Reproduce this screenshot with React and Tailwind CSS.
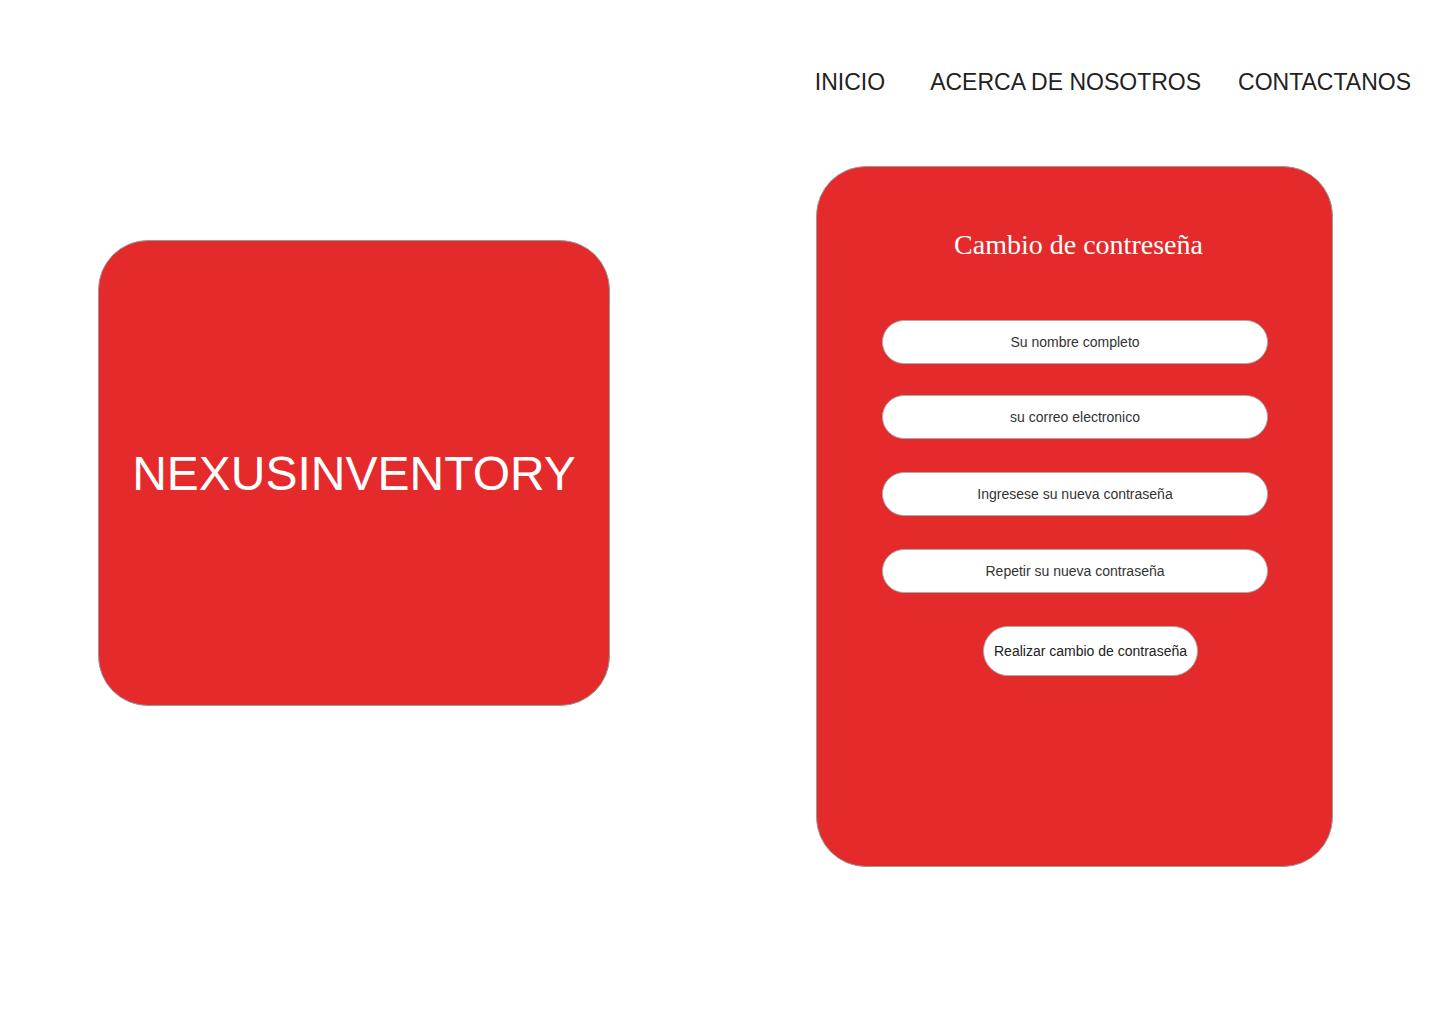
import React from "react";

const sans = { fontFamily: '"Liberation Sans", Arial, sans-serif' };

const fields = [
  { p: "Su nombre completo", mt: "mt-0" },
  { p: "su correo electronico", mt: "mt-[31px]" },
  { p: "Ingresese su nueva contraseña", mt: "mt-[33px]" },
  { p: "Repetir su nueva contraseña", mt: "mt-[33px]" },
];

export default function App() {
  return (
    <div className="min-h-[1024px] w-[1440px] bg-white font-['Liberation_Sans',Arial,sans-serif]">
      {/* menu */}
      <header className="flex justify-end pt-[69px] pr-[29px] text-[23px] leading-[26px] text-[#222]">
        <a className="mr-[45px]">INICIO</a>
        <a className="mr-[37px]">ACERCA DE NOSOTROS</a>
        <a>CONTACTANOS</a>
      </header>

      <main className="-mt-px flex items-start">
        <div className="ml-[98px] mt-[146px] flex h-[466px] w-[512px] items-center justify-center rounded-[50px] border border-[#9a9a9a] bg-[#e52a2b]">
          <h1 className="text-[48px] leading-[55px] text-white">NEXUSINVENTORY</h1>
        </div>

        <form className="ml-[206px] mt-[72px] flex h-[701px] w-[517px] flex-col rounded-[50px] border border-[#9a9a9a] bg-[#e52a2b] pt-[62px]">
          <h2 className="pl-[8px] text-center font-['Liberation_Serif','Times_New_Roman',serif] text-[28px] leading-[32px] text-white">
            Cambio de contreseña
          </h2>
          <div className="ml-[65px] mt-[59px] flex w-[386px] flex-col">
            {fields.map(f => (
              <input
                key={f.p}
                placeholder={f.p}
                className={`${f.mt} h-[44px] w-full rounded-full border border-[#aaa] bg-white text-center text-[14px] text-[#333] outline-none placeholder:text-[#333]`}
                style={sans}
              />
            ))}
          </div>
          <button
            type="button"
            className="ml-[166px] mt-[33px] h-[50px] w-[215px] rounded-full border border-[#aaa] bg-white text-center text-[14px] text-[#222]"
            style={sans}
          >
            Realizar cambio de contraseña
          </button>
        </form>
      </main>
    </div>
  );
}
